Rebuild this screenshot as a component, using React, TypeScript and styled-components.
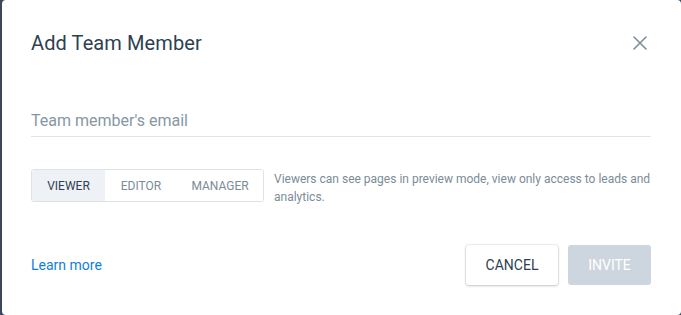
import React from "react";
import styled, { createGlobalStyle } from "styled-components";

const Global = createGlobalStyle`
  html, body { margin: 0; padding: 0; background: #3b4859; }
  body { font-family: Roboto, "Noto Sans", Arial, sans-serif; -webkit-font-smoothing: antialiased; }
`;

const Modal = styled.div`
  box-sizing: border-box;
  margin-left: 2px;
  width: 679px;
  height: 315px;
  background: #fff;
  border-radius: 4px;
  padding: 28px 30px 0 29px;
  display: flex;
  flex-direction: column;
`;

const Header = styled.div`
  display: flex;
  align-items: center;
  justify-content: space-between;
  height: 30px;
`;

const Title = styled.h1`
  margin: 0;
  font-size: 20px;
  font-weight: 400;
  color: #2e3f52;
  letter-spacing: 0.1px;
`;

const Close = styled.button`
  border: 0;
  background: none;
  padding: 0;
  width: 16px;
  height: 16px;
  margin-right: 3px;
  display: flex;
  cursor: pointer;
`;

const EmailField = styled.input`
  margin-top: 53px;
  border: 0;
  border-bottom: 1px solid #dde5eb;
  padding: 0 0 6px 0;
  font-family: inherit;
  font-size: 16px;
  color: #2e3f52;
  outline: none;
  &::placeholder { color: #8697a3; }
`;

const RoleRow = styled.div`
  margin-top: 32px;
  display: flex;
  align-items: flex-start;
  gap: 10px;
`;

const Segmented = styled.div`
  display: flex;
  border: 1px solid #dbe2e8;
  border-radius: 3px;
  overflow: hidden;
  height: 31px;
  flex-shrink: 0;
`;

const Segment = styled.button<{ $active?: boolean; $w: number }>`
  border: 0;
  width: ${(p) => p.$w}px;
  background: ${(p) => (p.$active ? "#eef2f6" : "#fff")};
  color: ${(p) => (p.$active ? "#2e3f52" : "#7b8c98")};
  font-family: inherit;
  font-size: 12px;
  text-transform: uppercase;
  padding: 0;
  cursor: pointer;
`;

const Description = styled.p`
  margin: 1px 0 0 0;
  font-size: 12px;
  line-height: 18px;
  color: #7b8c98;
`;

const Footer = styled.div`
  margin-top: auto;
  margin-bottom: 30px;
  display: flex;
  align-items: center;
  justify-content: space-between;
`;

const LearnMore = styled.a`
  font-size: 14px;
  color: #0f7ee0;
  text-decoration: none;
`;

const Actions = styled.div`
  display: flex;
  gap: 10px;
`;

const Button = styled.button<{ $primary?: boolean }>`
  height: 40px;
  padding: 0;
  width: ${(p) => (p.$primary ? 83 : 92)}px;
  border-radius: 3px;
  font-family: inherit;
  font-size: 14px;
  border: 0;
  background: ${(p) => (p.$primary ? "#cdd6de" : "#fff")};
  color: ${(p) => (p.$primary ? "#fff" : "#2e3f52")};
  box-shadow: ${(p) =>
    p.$primary ? "none" : "0 0 0 1px rgba(0,0,0,0.06), 0 1px 3px rgba(0,0,0,0.18)"};
  cursor: pointer;
`;

export default function App() {
  return (
    <>
      <Global />
      <Modal>
        <Header>
          <Title>Add Team Member</Title>
          <Close aria-label="Close">
            <svg width="16" height="16" viewBox="0 0 16 16">
              <path d="M2 2 L14 14 M14 2 L2 14" stroke="#7b8d99" strokeWidth="1.6" strokeLinecap="round" />
            </svg>
          </Close>
        </Header>
        <EmailField placeholder="Team member's email" />
        <RoleRow>
          <Segmented>
            <Segment $active $w={73}>Viewer</Segment>
            <Segment $w={72}>Editor</Segment>
            <Segment $w={86}>Manager</Segment>
          </Segmented>
          <Description>
            Viewers can see pages in preview mode, view only access to leads and analytics.
          </Description>
        </RoleRow>
        <Footer>
          <LearnMore href="#">Learn more</LearnMore>
          <Actions>
            <Button>CANCEL</Button>
            <Button $primary>INVITE</Button>
          </Actions>
        </Footer>
      </Modal>
    </>
  );
}
